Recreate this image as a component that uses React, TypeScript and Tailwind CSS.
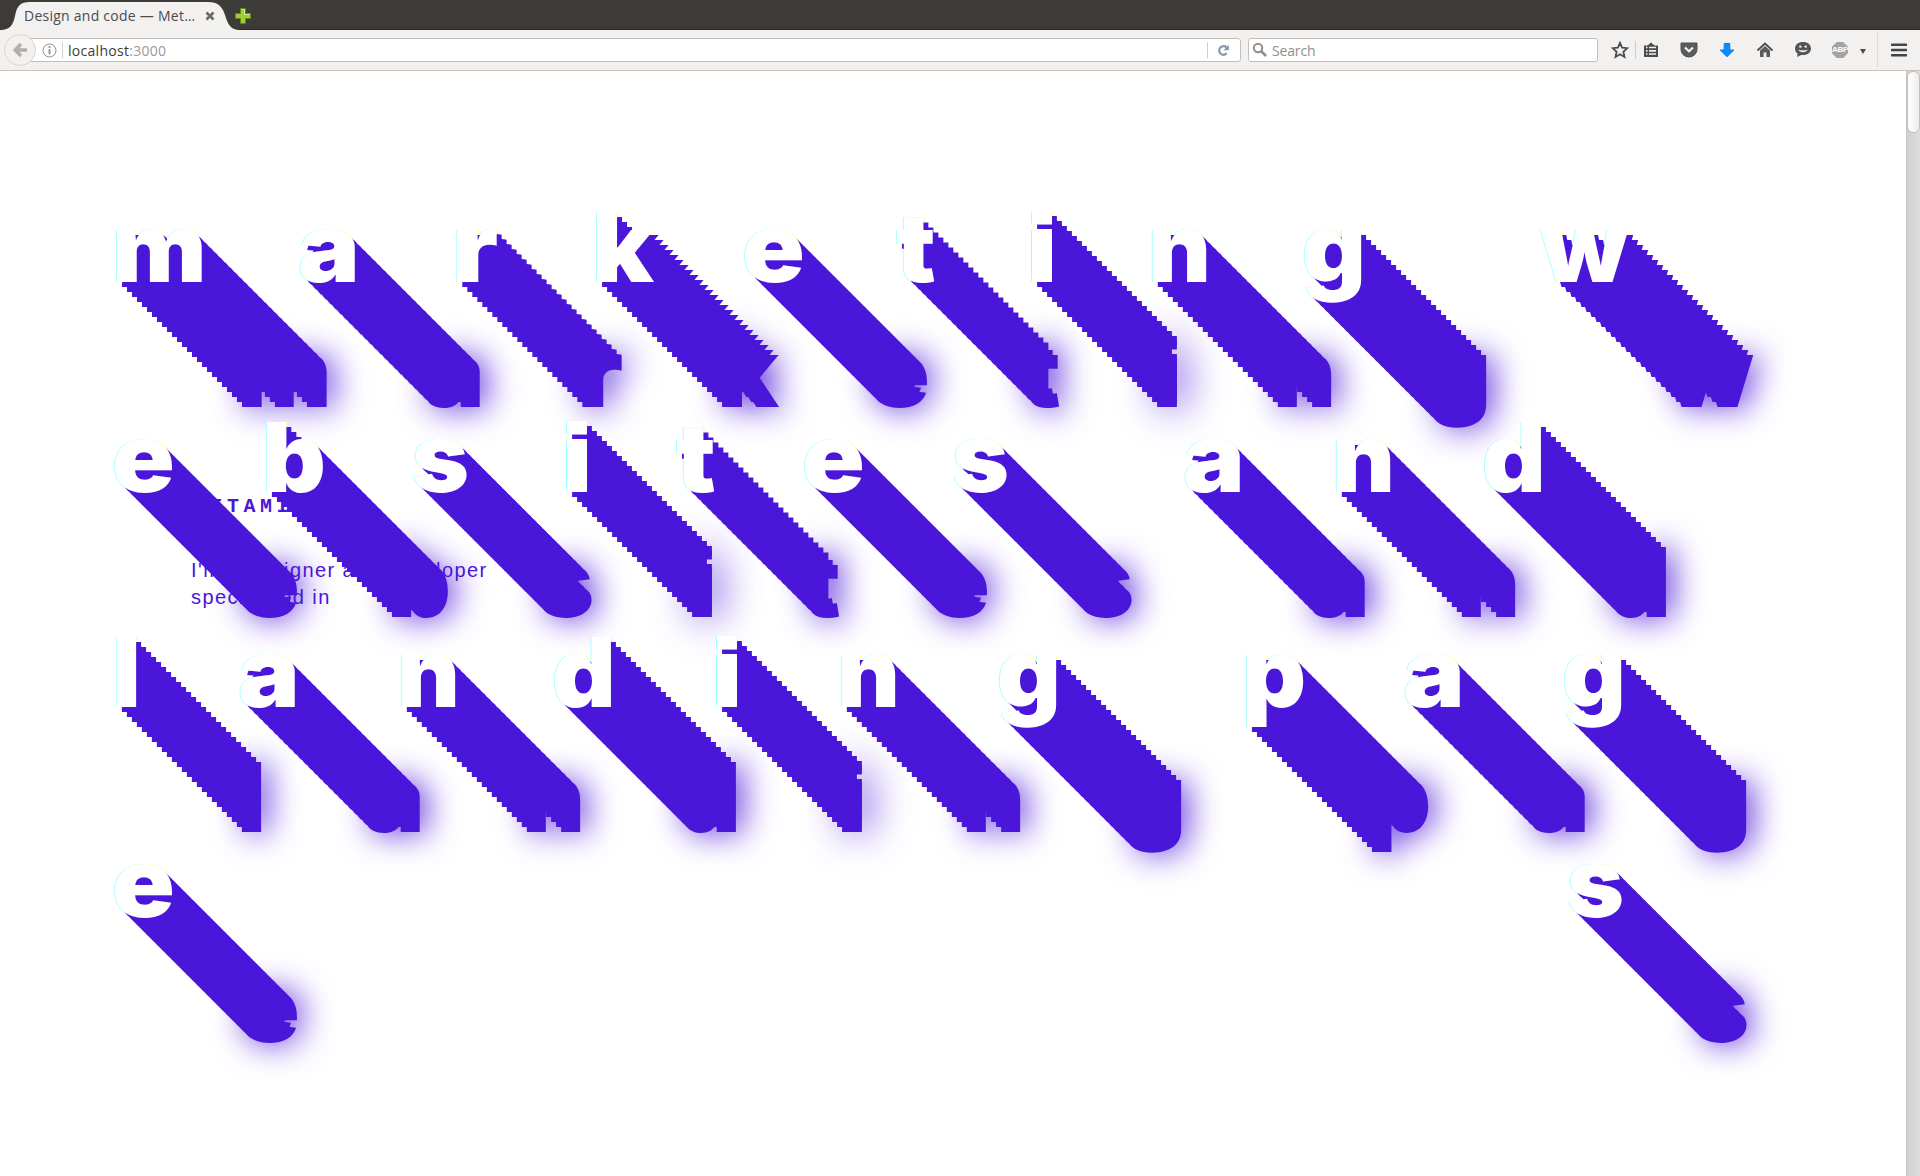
import { Fragment } from "react";

type Letter = [char: string, left: number];

const PURPLE = "#4a16d9";

// Left bearing (em) and horizontal stretch for each glyph of the display face.
const METRICS: Record<string, [number, number]> = {
  m: [0.05, 1.045],
  a: [0.022, 1.08],
  r: [0.05, 1.11],
  k: [0.05, 1.06],
  e: [0.027, 1.08],
  t: [0.003, 1.035],
  i: [0.0669, 1.57],
  n: [0.047, 1.01],
  g: [0.028, 1.03],
  w: [-0.003, 1.035],
  b: [0.05, 1.03],
  s: [0.025, 1.01],
  d: [0.028, 1.03],
  l: [0.046, 1.02],
  p: [0.047, 1.035],
};

const ROWS: { height: string; letters: Letter[] }[] = [
  {
    height: "h-[210px]",
    letters: [["m", 117], ["a", 300.5], ["r", 457], ["k", 597], ["e", 744.5], ["t", 896.5], ["i", 1032], ["n", 1152.5], ["g", 1305], ["w", 1541]],
  },
  {
    height: "h-[215px]",
    letters: [["e", 114.5], ["b", 267], ["s", 414], ["i", 567], ["t", 676.5], ["e", 805], ["s", 954], ["a", 1185.5], ["n", 1337], ["d", 1485]],
  },
  {
    height: "h-[210px]",
    letters: [["l", 117], ["a", 240.5], ["n", 402], ["d", 555], ["i", 717], ["n", 842], ["g", 999.5], ["p", 1247], ["a", 1405], ["g", 1564.5]],
  },
  { height: "h-[210px]", letters: [["e", 114.5], ["s", 1569.5]] },
];

// `grow` thickens the glyph vertically by that many pixels on both sides.
function longShadow(stretch: number, grow: number) {
  const offsets = grow ? [-grow, grow] : [0];
  const layers: string[] = grow ? offsets.map((o) => `0 ${o}px 0 #fff`) : [];
  for (let d = 5; d <= 125; d += 5) {
    for (const o of offsets) layers.push(`${d / stretch}px ${d + o}px 0 ${PURPLE}`);
  }
  for (const o of offsets) {
    layers.push(`${-1 / stretch}px ${o}px 0 rgba(120,255,255,0.6)`, `${1 / stretch}px ${o}px 0 rgba(255,250,80,0.6)`);
  }
  layers.push(`${130 / stretch}px 126px 32px ${PURPLE}`);
  return layers.join(", ");
}

function Row({ letters, height }: { letters: Letter[]; height: string }) {
  const origins = letters.map(([c, x]) => x - METRICS[c][0] * 96 * METRICS[c][1]);
  return (
    <div className={`flex items-baseline leading-[96px] ${height}`}>
      <span className="shrink-0" style={{ width: origins[0] }} />
      {letters.map(([c], i) => {
        const stretch = METRICS[c][1];
        const width = (origins[i + 1] ?? origins[i] + 90) - origins[i];
        const isI = c === "i";
        return (
          <span
            key={i}
            className={isI ? "shrink-0 origin-left font-['Liberation_Sans',sans-serif] text-[92px] font-bold" : "shrink-0 origin-left"}
            style={{
              width,
              textShadow: longShadow(stretch, isI ? 2 : 0),
              transform: `translateY(${isI ? -2 : 0}px) scaleX(${stretch})`,
            }}
          >
            {c}
          </span>
        );
      })}
    </div>
  );
}

function TabStrip() {
  return (
    <div className="flex h-[30px] items-start border-b border-[#2c2a28] bg-[#3c3b37]">
      <div className="grid h-[30px] w-[240px] shrink-0">
        <svg className="col-start-1 row-start-1" width="240" height="30" viewBox="0 0 240 30">
          <path d="M0 30C10 30 13 25 15 16C17 6 20 2 30 2H208C218 2 222 6 225 15C228 25 231 30 240 30Z" fill="#f2f1f0" />
        </svg>
        <div className="col-start-1 row-start-1 flex items-center pb-0 pl-6 pt-px text-[14px] tracking-[0.25px] text-[#4c4c4c]">
          <span className="w-[181px] whitespace-nowrap">Design and code — Met…</span>
          <svg width="10" height="10" viewBox="0 0 10 10">
            <path d="M1.5 1.5l7 7M8.5 1.5l-7 7" stroke="#6a6a68" strokeWidth="2.6" />
          </svg>
        </div>
      </div>
      <svg className="-ml-[6px] mt-[7px]" width="18" height="18" viewBox="0 0 18 18">
        <path d="M6.5 1.5h5v5h5v5h-5v5h-5v-5h-5v-5h5z" fill="#a6cc34" stroke="#5c8a1c" />
        <path d="M7.5 2.5h3v5h5" fill="none" stroke="#d3e88a" />
      </svg>
    </div>
  );
}

function ToolbarIcons() {
  return (
    <div className="flex h-10 items-center">
      <svg className="ml-[13px]" width="18" height="18" viewBox="0 0 18 18">
        <path d="M9 1.8l2.1 4.9 5.2.5-3.9 3.6 1.1 5.2L9 13.3 4.5 16l1.1-5.2L1.7 7.2l5.2-.5z" fill="none" stroke="#4c4c4c" strokeWidth="1.8" />
      </svg>
      <span className="ml-[6px] h-[18px] w-px bg-[#cfccc9]" />
      <svg className="ml-[6px]" width="18" height="18" viewBox="0 0 18 18">
        <path d="M2 4.5h3.5L9 1.5l3.5 3H16V16H2z" fill="#4c4c4c" />
        <path d="M4 6.5h1.5M7 6.5h7M4 9.8h1.5M7 9.8h7M4 13h1.5M7 13h7" stroke="#f2f1f0" strokeWidth="1.7" />
      </svg>
      <svg className="ml-5" width="18" height="18" viewBox="0 0 18 18">
        <path d="M1 2h16v6.5a8 7.5 0 0 1-16 0z" fill="#5c5c5c" stroke="#4c4c4c" />
        <path d="M5 6.5l4 3.8 4-3.8" fill="none" stroke="#f2f1f0" strokeWidth="2.2" />
      </svg>
      <svg className="ml-5" width="18" height="18" viewBox="0 0 18 18">
        <path d="M6.2 2.5h5.6V9h3.9L9 15.8 2.3 9h3.9z" fill="#0a8cff" stroke="#0a7ce4" />
      </svg>
      <svg className="ml-5" width="18" height="18" viewBox="0 0 18 18">
        <path d="M1.5 9.5L9 2.5l7.5 7" fill="none" stroke="#4c4c4c" strokeWidth="1.8" />
        <path d="M4 9.5l5-4.6 5 4.6V16h-3.6v-4.5H7.6V16H4z" fill="#5c5c5c" />
      </svg>
      <svg className="ml-5" width="18" height="18" viewBox="0 0 18 18">
        <path d="M9 1c4.7 0 8 2.7 8 6.5S13.7 14 9 14c-.6 0-1.2 0-1.8-.1L3 16l.6-3.2C2 11.6 1 9.7 1 7.5 1 3.7 4.3 1 9 1z" fill="#555" />
        <circle cx="6.3" cy="5.6" r="1.2" fill="#f2f1f0" />
        <circle cx="11.7" cy="5.6" r="1.2" fill="#f2f1f0" />
        <path d="M4.3 8.5c1 3.7 8.4 3.7 9.4 0-2.500 1.200-6.900 1.200-9.400 0z" fill="#f2f1f0" />
      </svg>
      <span className="ml-5 flex h-4 w-4 items-center justify-center bg-[#a3a3a3] font-['Liberation_Sans',sans-serif] text-[8px] font-bold tracking-[-0.3px] text-white [clip-path:polygon(30%_0,70%_0,100%_30%,100%_70%,70%_100%,30%_100%,0_70%,0_30%)]">
        ABP
      </span>
      <svg className="ml-[12px] mt-[2px]" width="6" height="5" viewBox="0 0 6 5">
        <path d="M0 0h6L3 5z" fill="#4c4c4c" />
      </svg>
      <span className="ml-[11px] h-[34px] w-px bg-[#dcdad8]" />
      <svg className="ml-[13px]" width="16" height="14" viewBox="0 0 16 14">
        <path d="M1 1.7h14M1 7h14M1 12.3h14" stroke="#454545" strokeWidth="2.6" strokeLinecap="round" />
      </svg>
    </div>
  );
}

function NavBar() {
  return (
    <div className="flex h-[41px] items-center border-b border-[#cbc2bb] bg-[#f2f1f0] text-[14px] tracking-[-0.15px]">
      <span className="z-10 ml-1 flex h-8 w-8 shrink-0 items-center justify-center rounded-full border border-[#d9d6d3] bg-[#f2f1f0]">
        <svg width="14" height="16" viewBox="0 0 14 16">
          <path d="M8 2L2.2 8 8 14M2.5 8H14" fill="none" stroke="#b0afad" strokeWidth="3.4" />
        </svg>
      </span>
      <div className="-ml-2 flex h-6 w-[1213px] shrink-0 items-center rounded-r-[3px] border border-[#c5beb8] bg-white">
        <svg className="ml-[13px]" width="15" height="15" viewBox="0 0 15 15">
          <circle cx="7.5" cy="7.5" r="6.5" fill="none" stroke="#939393" />
          <path d="M7.5 6.2v5M7.5 3.2v1.8" stroke="#8a8a8a" strokeWidth="1.8" />
        </svg>
        <span className="ml-[5px] h-4 w-px bg-[#d0d0d0]" />
        <span className="ml-[5px] tracking-[0.28px] text-[#3c3c3c]">
          localhost<span className="text-[#9a9a9a]">:3000</span>
        </span>
        <span className="ml-auto h-4 w-px bg-[#d0d0d0]" />
        <svg className="ml-[9px] mr-[11px]" width="12" height="13" viewBox="0 0 12 13">
          <path d="M9.8 9.3a4.3 4.3 0 1 1-.3-5.9" fill="none" stroke="#8a98a8" strokeWidth="2.2" />
          <path d="M11.8.8v5.4H6.4z" fill="#8a98a8" />
        </svg>
      </div>
      <div className="ml-[7px] flex h-6 w-[350px] shrink-0 items-center rounded-[3px] border border-[#c5beb8] bg-white">
        <svg className="ml-[3px]" width="16" height="16" viewBox="0 0 16 16">
          <circle cx="6" cy="6" r="4.2" fill="none" stroke="#8f8f8f" strokeWidth="2" />
          <path d="M9 9l5 5" stroke="#8f8f8f" strokeWidth="2.6" />
        </svg>
        <span className="ml-[4px] text-[#8f8f8f]">Search</span>
      </div>
      <ToolbarIcons />
    </div>
  );
}

export default function App() {
  return (
    <div className="flex h-[1176px] w-[1920px] flex-col overflow-hidden bg-white font-['Open_Sans','Noto_Sans',sans-serif]">
      <TabStrip />
      <NavBar />
      <div className="flex min-h-0 flex-1">
        <main className="grid w-[1906px] shrink-0 overflow-hidden bg-white">
          <section className="col-start-1 row-start-1 pl-[191px] pt-[424px] text-[#4a16d9]">
            <p className="h-[62px] pl-[3px] font-['Liberation_Mono',monospace] text-[20px] font-bold leading-[24px] tracking-[4.5px]">VITAMIN</p>
            <p className="font-['Liberation_Sans',sans-serif] text-[20px] leading-[27px] tracking-[1.4px]">
              {["I'm a designer and developer", "specialised in"].map((line) => (
                <Fragment key={line}>
                  {line}
                  <br />
                </Fragment>
              ))}
            </p>
          </section>
          <h1 className="z-10 col-start-1 row-start-1 pt-[128px] font-[Inter] text-[96px] font-black text-white">
            {ROWS.map((row, i) => (
              <Row key={i} letters={row.letters} height={row.height} />
            ))}
          </h1>
        </main>
        <div className="w-[14px] shrink-0 border-l border-[#c9c6c4] bg-gradient-to-r from-[#cfcfcf] to-[#dedede]">
          <div className="h-[62px] rounded-[6px] border border-[#c2bfbc] bg-gradient-to-r from-white to-[#eeedec]" />
        </div>
      </div>
    </div>
  );
}
